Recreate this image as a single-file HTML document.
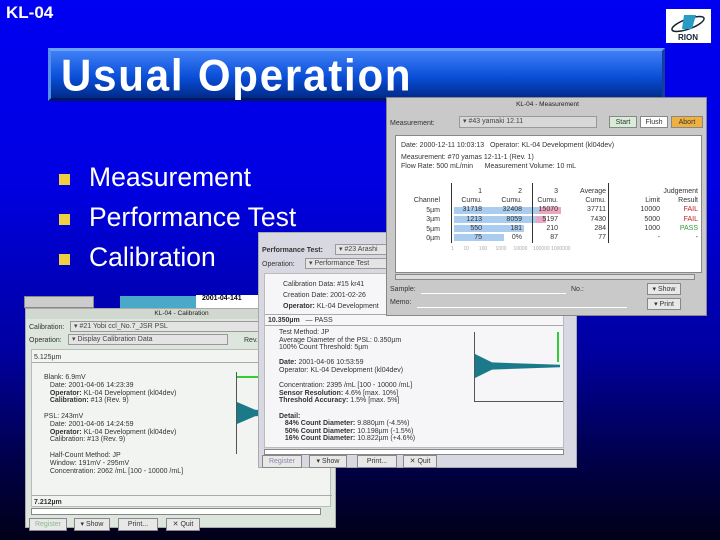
<!DOCTYPE html>
<html><head><meta charset="utf-8"><style>
*{margin:0;padding:0;box-sizing:border-box}
body{width:720px;height:540px;overflow:hidden;position:relative;font-family:"Liberation Sans",sans-serif;background:linear-gradient(#0000f2 0%,#0000e0 35%,#0000a0 65%,#00004a 85%,#000018 100%)}
.a{position:absolute}
.t{font-size:7px;line-height:9px;color:#333;white-space:nowrap}
.b{font-weight:bold}
.fld{position:absolute;border:1px solid #999;background:#e4e4e4;font-size:7px;line-height:10px;padding-left:3px;color:#444;white-space:nowrap;overflow:hidden}
.btn{position:absolute;border:1px solid #888;background:#e8e8e8;font-size:7px;line-height:11px;text-align:center;color:#333}
.c{position:absolute;font-size:7px;line-height:9px;color:#333;text-align:right;white-space:nowrap}
</style></head><body>
<div class="a b" style="left:6px;top:3px;color:#fff;font-size:17px">KL-04</div>
<div class="a" style="left:666px;top:9px;width:45px;height:34px;background:#fff">
<svg width="45" height="34"><ellipse cx="22" cy="15" rx="17" ry="5" fill="none" stroke="#123" stroke-width="1.5" transform="rotate(-20 22 15)"/><polygon points="18,6 30,6 26,20 16,20" fill="#2a9bc4"/><text x="22" y="31" font-size="8" font-weight="bold" text-anchor="middle" font-family="Liberation Sans" fill="#123">RION</text></svg></div>
<div class="a" style="left:48px;top:48px;width:617px;height:53px;background:linear-gradient(#3f7ff6,#0a4fd8 55%,#002a8a);border-top:3px solid #6aa0ff;border-left:3px solid #5590f0;border-right:3px solid #173c9a;border-bottom:3px solid #00185a"></div>
<div class="a b" style="left:61px;top:52px;color:#fff;font-size:42px;letter-spacing:1.8px;transform:scaleY(1.05)">Usual Operation</div>
<div class="a" style="left:59px;top:174px;width:11px;height:11px;background:#f0d040"></div>
<div class="a" style="left:59px;top:214px;width:11px;height:11px;background:#f0d040"></div>
<div class="a" style="left:59px;top:254px;width:11px;height:11px;background:#f0d040"></div>
<div class="a" style="left:89px;top:162px;color:#fff;font-size:26.5px;line-height:30px">Measurement</div>
<div class="a" style="left:89px;top:202px;color:#fff;font-size:26.5px;line-height:30px">Performance Test</div>
<div class="a" style="left:89px;top:242px;color:#fff;font-size:26.5px;line-height:30px">Calibration</div>

<!-- Calibration window -->
<div class="a" style="left:24px;top:296px;width:70px;height:12px;background:#ccc;border:1px solid #888"></div>
<div class="a" style="left:120px;top:296px;width:105px;height:12px;background:#4aa8c8"></div>
<div class="a" style="left:196px;top:295px;width:72px;height:15px;background:#fff;font-size:7px;font-weight:bold;color:#000;line-height:8px;padding-left:6px">2001-04-141</div>
<div class="a" style="left:25px;top:308px;width:311px;height:220px;background:#dde6dd;border:1px solid #aaa">
 <div class="a" style="left:0;top:0;width:311px;height:10px;background:#d0d8d0;font-size:6.5px;text-align:center;line-height:10px;color:#222">KL-04 - Calibration</div>
 <div class="t a" style="left:3px;top:14px">Calibration:</div><div class="fld" style="left:44px;top:12px;width:225px;height:11px">▾ #21 Yobi ccl_No.7_JSR PSL</div>
 <div class="t a" style="left:3px;top:27px">Operation:</div><div class="fld" style="left:42px;top:25px;width:160px;height:11px">▾ Display Calibration Data</div>
 <div class="t a" style="left:218px;top:27px">Rev.:</div><div class="fld" style="left:240px;top:25px;width:40px;height:11px;text-align:right">1</div>
 <div class="a" style="left:5px;top:40px;width:300px;height:158px;background:#f2f4f2;border:1px solid #bbb">
  <div class="t a" style="left:2px;top:3px">5.125µm</div>
  <div class="a" style="left:0;top:12px;width:300px;border-top:1px solid #aaa"></div>
  <div class="t a" style="left:12px;top:24px;line-height:7.8px">Blank: 6.9mV<br>&nbsp;&nbsp;&nbsp;Date: 2001-04-06 14:23:39<br>&nbsp;&nbsp;&nbsp;<b>Operator:</b> KL-04 Development (kl04dev)<br>&nbsp;&nbsp;&nbsp;<b>Calibration:</b> #13 (Rev. 9)<br><br>PSL: 243mV<br>&nbsp;&nbsp;&nbsp;Date: 2001-04-06 14:24:59<br>&nbsp;&nbsp;&nbsp;<b>Operator:</b> KL-04 Development (kl04dev)<br>&nbsp;&nbsp;&nbsp;Calibration: #13 (Rev. 9)<br><br>&nbsp;&nbsp;&nbsp;Half-Count Method: JP<br>&nbsp;&nbsp;&nbsp;Window: 191mV - 295mV<br>&nbsp;&nbsp;&nbsp;Concentration: 2062 /mL [100 - 10000 /mL]</div>
  <div class="a" style="left:204px;top:22px;width:60px;height:82px;border-left:1px solid #555">
   <div class="a" style="left:0;top:4px;width:60px;height:2px;background:#3c3"></div>
   <div class="a" style="left:0;top:30px;width:60px;height:22px;background:#1a7a8a;clip-path:polygon(0 0,30% 35%,100% 45%,100% 55%,30% 65%,0 100%)"></div>
  </div>
  <div class="a" style="left:0;top:145px;width:300px;border-top:1px solid #aaa"></div>
  <div class="t a b" style="left:2px;top:148px">7.212µm</div>
 </div>
 <div class="a" style="left:5px;top:199px;width:290px;height:7px;border:1px solid #888;background:#fff"></div>
 <div class="btn" style="left:3px;top:209px;width:38px;color:#8b8">Register</div>
 <div class="btn" style="left:48px;top:209px;width:36px">▾ Show</div>
 <div class="btn" style="left:92px;top:209px;width:40px">Print...</div>
 <div class="btn" style="left:140px;top:209px;width:34px">✕ Quit</div>
</div>

<!-- Performance window -->
<div class="a" style="left:258px;top:232px;width:319px;height:236px;background:#d8d8e2;border:1px solid #aaa">
 <div class="t a" style="left:3px;top:13px"><b>Performance Test:</b></div><div class="fld" style="left:76px;top:11px;width:100px;height:11px">▾ #23 Arashi</div>
 <div class="t a" style="left:3px;top:27px">Operation:</div><div class="fld" style="left:46px;top:25px;width:90px;height:11px">▾ Performance Test</div>
 <div class="a" style="left:5px;top:40px;width:300px;height:175px;background:#f6f6f8;border:1px solid #bbb;overflow:hidden">
  <div class="t a" style="left:18px;top:5px;line-height:11px">Calibration Data: #15 kr41<br>Creation Date: 2001-02-26<br><b>Operator:</b> KL-04 Development</div>
  <div class="a" style="left:0;top:40px;width:300px;border-top:1px solid #aaa"></div>
  <div class="t a" style="left:3px;top:42px"><b>10.350µm</b> &nbsp; — PASS</div>
  <div class="a" style="left:0;top:51px;width:300px;border-top:1px solid #aaa"></div>
  <div class="t a" style="left:14px;top:55px;line-height:7.6px">Test Method: JP<br>Average Diameter of the PSL: 0.350µm<br>100% Count Threshold: 5µm<br><br><b>Date:</b> 2001-04-06 10:53:59<br>Operator: KL-04 Development (kl04dev)<br><br>Concentration: 2395 /mL [100 - 10000 /mL]<br><b>Sensor Resolution:</b> 4.6% [max. 10%]<br><b>Threshold Accuracy:</b> 1.5% [max. 5%]<br><br><b>Detail:</b><br>&nbsp;&nbsp;&nbsp;<b>84% Count Diameter:</b> 9.880µm (-4.5%)<br>&nbsp;&nbsp;&nbsp;<b>50% Count Diameter:</b> 10.198µm (-1.5%)<br>&nbsp;&nbsp;&nbsp;<b>16% Count Diameter:</b> 10.822µm (+4.6%)</div>
  <div class="a" style="left:209px;top:58px;width:92px;height:70px;border-left:1px solid #555;border-bottom:1px solid #555">
   <div class="a" style="left:0;top:22px;width:85px;height:24px;background:#1a7a8a;clip-path:polygon(0 0,20% 35%,100% 45%,100% 55%,20% 65%,0 100%)"></div>
   <div class="a" style="left:82px;top:0;width:2px;height:30px;background:#3c3"></div>
  </div>
 </div>
 <div class="a" style="left:5px;top:216px;width:300px;height:6px;border:1px solid #888;background:#fff"></div>
 <div class="btn" style="left:3px;top:222px;width:40px;color:#88a">Register</div>
 <div class="btn" style="left:50px;top:222px;width:38px">▾ Show</div>
 <div class="btn" style="left:98px;top:222px;width:40px">Print...</div>
 <div class="btn" style="left:144px;top:222px;width:34px">✕ Quit</div>
</div>

<!-- Measurement window -->
<div class="a" style="left:386px;top:97px;width:321px;height:219px;background:#c9c9c9;border:1px solid #888">
 <div class="a" style="left:0;top:0;width:321px;height:14px;font-size:6.5px;text-align:center;line-height:14px;color:#222">KL-04 - Measurement</div>
 <div class="t a" style="left:3px;top:21px">Measurement:</div><div class="fld" style="left:72px;top:18px;width:138px;height:12px;background:#d8d8d8">▾ #43 yamaki 12.11</div>
 <div class="btn" style="left:222px;top:18px;width:28px;height:12px;background:#d8ecd8">Start</div>
 <div class="btn" style="left:253px;top:18px;width:28px;height:12px;background:#fff">Flush</div>
 <div class="btn" style="left:284px;top:18px;width:32px;height:12px;background:#f0b040">Abort</div>
 <div class="a" style="left:8px;top:37px;width:307px;height:138px;background:#fff;border:1px solid #888">
  <div class="t a" style="left:5px;top:5px">Date: 2000-12-11 10:03:13 &nbsp; Operator: KL-04 Development (kl04dev)</div>
  <div class="t a" style="left:5px;top:18px;line-height:8.5px">Measurement: #70 yamas 12-11-1 (Rev. 1)<br>Flow Rate: 500 mL/min &nbsp;&nbsp;&nbsp;&nbsp; Measurement Volume: 10 mL</div>
  <div class="a" style="left:58px;top:71px;width:85px;height:7px;background:#aaccee"></div>
  <div class="a" style="left:143px;top:71px;width:22px;height:7px;background:#e8a8c0"></div>
  <div class="a" style="left:58px;top:80px;width:82px;height:7px;background:#aaccee"></div>
  <div class="a" style="left:140px;top:80px;width:10px;height:7px;background:#e8a8c0"></div>
  <div class="a" style="left:58px;top:89px;width:70px;height:7px;background:#aaccee"></div>
  <div class="a" style="left:58px;top:98px;width:50px;height:7px;background:#aaccee"></div>
  <div class="a" style="left:55px;top:47px;height:60px;border-left:1px solid #333"></div>
  <div class="a" style="left:136px;top:47px;height:60px;border-left:1px solid #333"></div>
  <div class="a" style="left:212px;top:47px;height:60px;border-left:1px solid #333"></div>
  <div class="c" style="left:0;width:44px;top:60px;line-height:9.5px">Channel<br>5µm<br>3µm<br>5µm<br>0µm</div>
  <div class="c" style="left:40px;width:46px;top:51px;line-height:9.2px">1<br>Cumu.<br>31718<br>1213<br>550<br>75</div>
  <div class="c" style="left:80px;width:46px;top:51px;line-height:9.2px">2<br>Cumu.<br>32408<br>8059<br>181<br>0%</div>
  <div class="c" style="left:116px;width:46px;top:51px;line-height:9.2px">3<br>Cumu.<br>15070<br>5197<br>210<br>87</div>
  <div class="c" style="left:160px;width:50px;top:51px;line-height:9.2px">Average<br>Cumu.<br>37711<br>7430<br>284<br>77</div>
  <div class="c" style="left:220px;width:44px;top:51px;line-height:9.2px">&nbsp;<br>Limit<br>10000<br>5000<br>1000<br>-</div>
  <div class="c" style="left:250px;width:52px;top:51px;line-height:9.2px">Judgement<br>Result<br><span style="color:#b22">FAIL</span><br><span style="color:#b22">FAIL</span><br><span style="color:#393">PASS</span><br>-</div>
  <div class="a" style="left:55px;top:110px;font-size:5px;color:#aaa">1 &nbsp;&nbsp;&nbsp;&nbsp;&nbsp; 10 &nbsp;&nbsp;&nbsp;&nbsp;&nbsp; 100 &nbsp;&nbsp;&nbsp;&nbsp; 1000 &nbsp;&nbsp;&nbsp; 10000 &nbsp;&nbsp; 100000 1000000</div>
 </div>
 <div class="a" style="left:8px;top:176px;width:300px;height:6px;border:1px solid #888;background:#ddd"></div>
 <div class="t a" style="left:3px;top:187px">Sample:</div><div class="a" style="left:34px;top:195px;width:145px;border-top:1px solid #fff"></div>
 <div class="t a" style="left:184px;top:187px">No.:</div>
 <div class="t a" style="left:3px;top:200px">Memo:</div><div class="a" style="left:30px;top:209px;width:210px;border-top:1px solid #fff"></div>
 <div class="btn" style="left:260px;top:185px;width:34px;height:12px">▾ Show</div>
 <div class="btn" style="left:260px;top:200px;width:34px;height:12px">▾ Print</div>
</div>
</body></html>
